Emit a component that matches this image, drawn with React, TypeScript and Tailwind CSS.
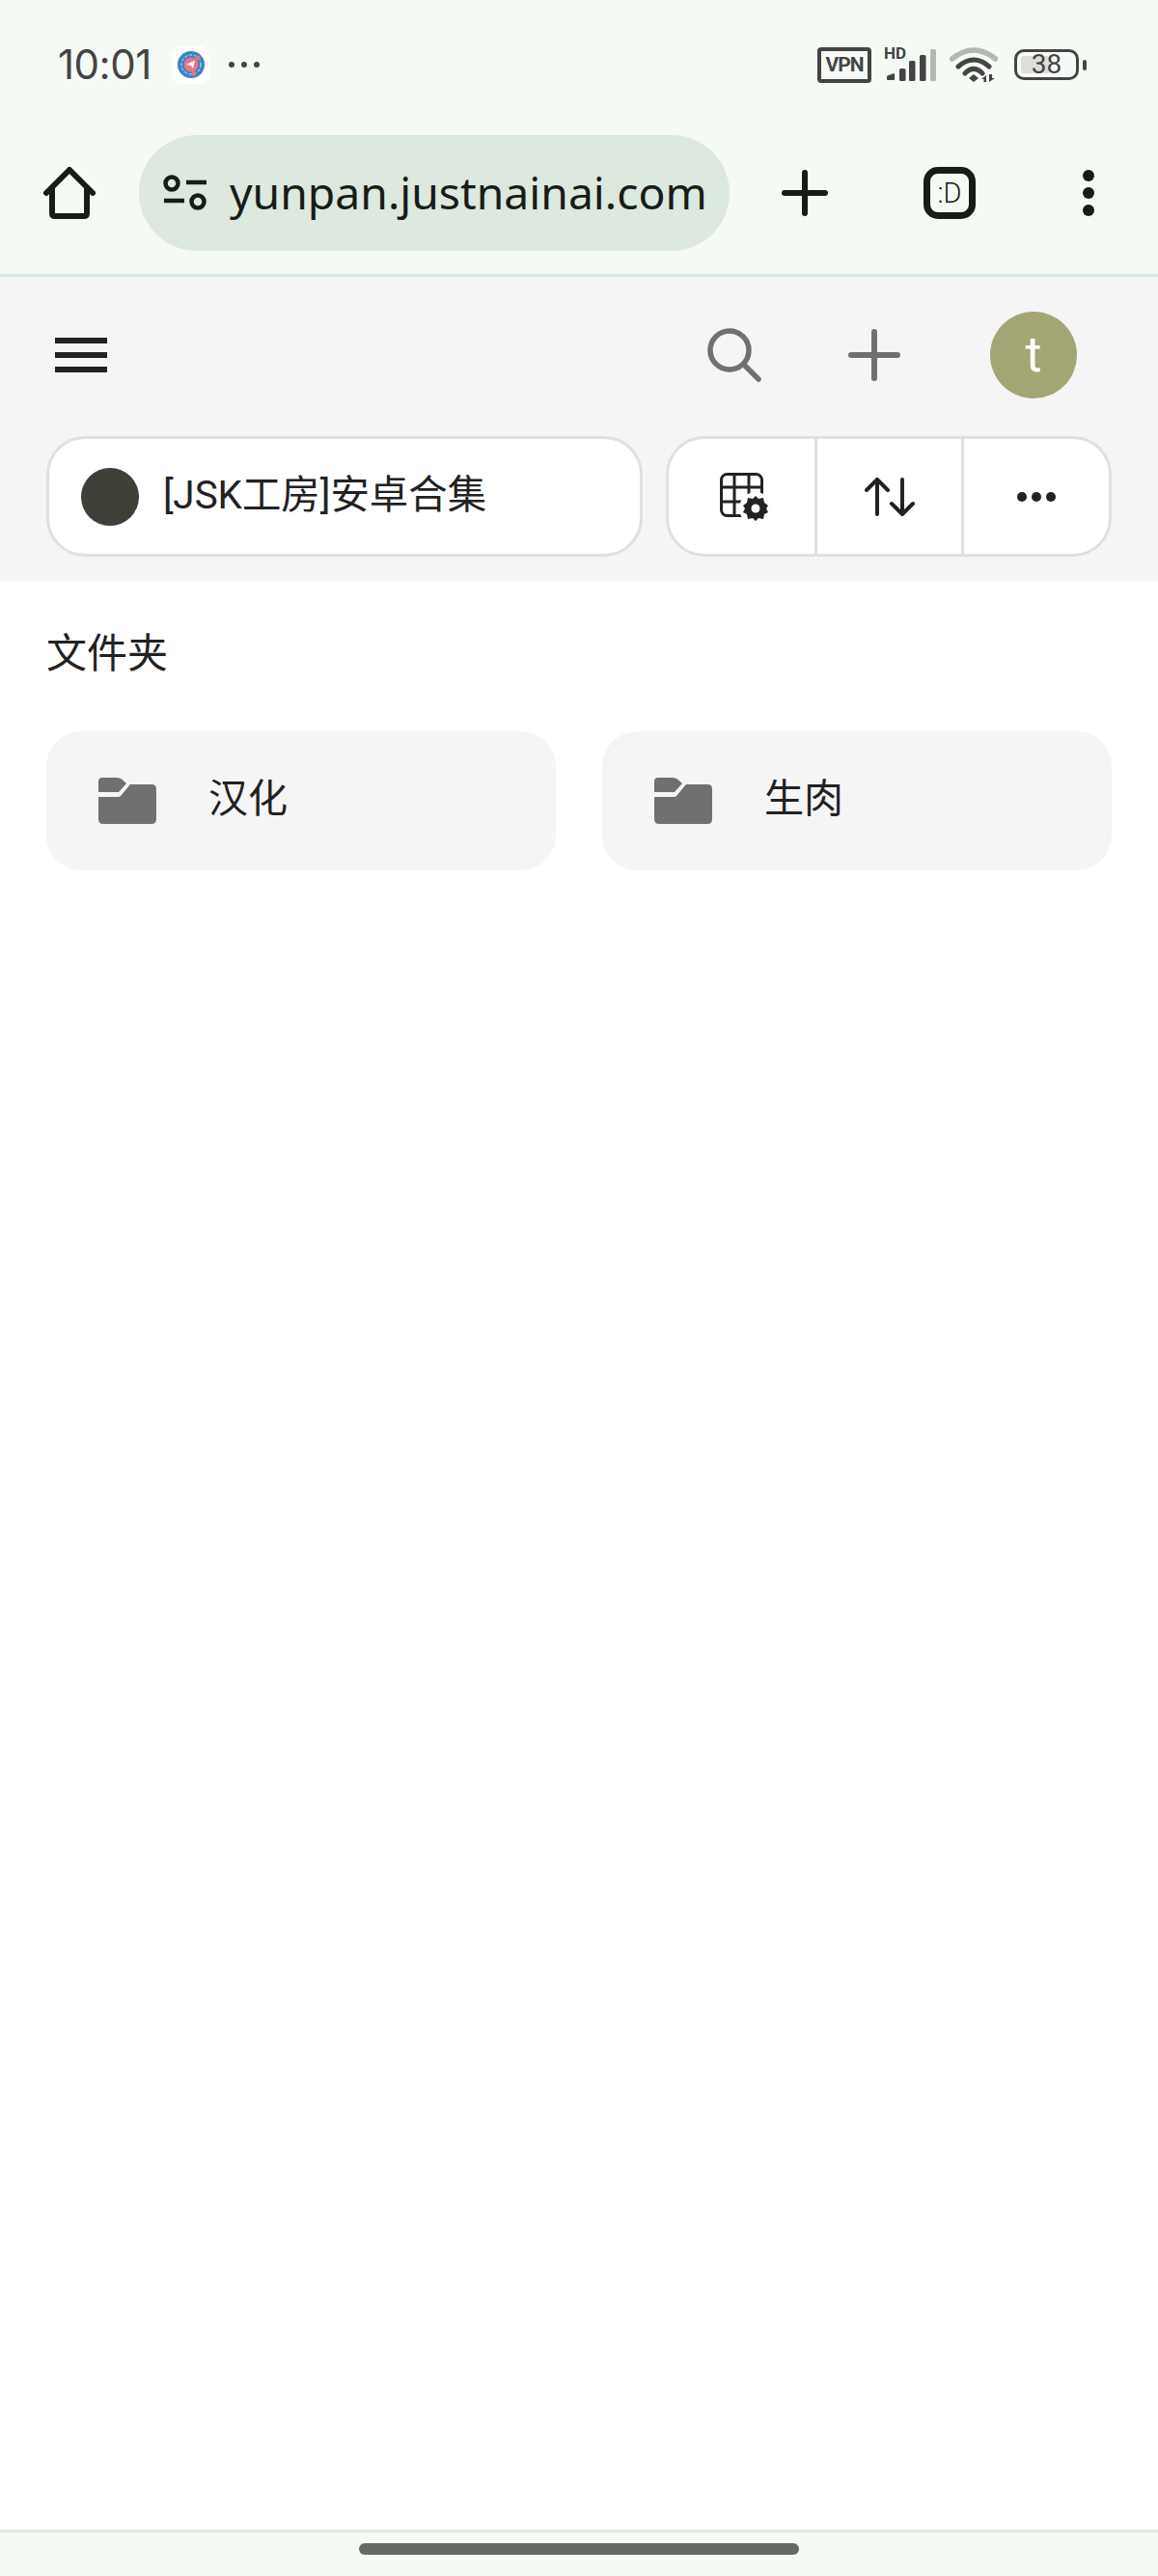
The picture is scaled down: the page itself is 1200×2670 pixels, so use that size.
import React from 'react';

const cjk = '[font-family:Roboto,"Noto_Sans_CJK_SC",sans-serif]';

function StatusIcons() {
    return (
        <div className="flex items-center ml-[578px]">
            {/* VPN badge */}
            <div className="w-[56px] h-[37px] border-[4px] border-[#444444] rounded-[4px] flex items-center justify-center text-[#444444] text-[21px] font-bold leading-none tracking-[-1px] [font-family:Roboto,sans-serif]">
                VPN
            </div>
            {/* HD + signal */}
            <div className="relative w-[54px] h-[36px] ml-[13px]">
                <span className="absolute left-0 top-[-3px] text-[#444444] text-[17px] font-bold leading-[18px] [font-family:Roboto,sans-serif]">HD</span>
                <svg width="54" height="36" viewBox="0 0 54 36" className="absolute left-0 top-0">
                    <path d="M3.5 33.5 V30 L10.5 27.5 V33.5 Z" fill="#444444" stroke="#444444" strokeLinejoin="round" />
                    <rect x="16" y="22" width="6.5" height="13" rx="1.5" fill="#444444" />
                    <rect x="26" y="14" width="6.5" height="21" rx="1.5" fill="#444444" />
                    <rect x="37" y="8" width="6.5" height="27" rx="1.5" fill="#444444" />
                    <rect x="48" y="2" width="6" height="33" rx="1.5" fill="#b4b8b2" />
                </svg>
            </div>
            {/* wifi */}
            <svg width="50" height="38" viewBox="0 0 50 38" className="ml-[14px]">
                <path d="M2.5 13 Q25 -5 47.5 13" fill="none" stroke="#b4b8b2" strokeWidth="5.5" strokeLinecap="round" />
                <path d="M9 21 Q25 7 41 21" fill="none" stroke="#444444" strokeWidth="5" strokeLinecap="round" />
                <path d="M16 28 Q25 19 34 28" fill="none" stroke="#444444" strokeWidth="5" strokeLinecap="round" />
                <path d="M20 33 L25 29 L30 33 L25 37 Z" fill="#444444" />
                <path d="M38 37 V30 L33 34 H35.5 V37 Z M41 29 V37 L47 33 H44 V29 Z" fill="#444444" />
            </svg>
            {/* battery */}
            <div className="relative w-[67px] h-[32px] ml-[17px] border-[3px] border-[#444444] rounded-[10px] flex items-center justify-center">
                <div className="absolute left-[4px] top-[4px] bottom-[4px] w-[30px] bg-[#dcdfd9] rounded-[3px]" />
                <span className="relative text-[#444444] text-[28px] leading-none [font-family:Roboto,sans-serif]">38</span>
            </div>
            <div className="w-[4px] h-[11px] ml-[4px] bg-[#444444] rounded-[2px]" />
        </div>
    );
}

function FolderIcon() {
    return (
        <svg width="60" height="48" viewBox="0 0 60 48" fill="#707070" className="shrink-0">
            <path d="M4 0 H19 Q22 0 24 1.5 L29 6 L21 15 H0 V4 Q0 0 4 0 Z" />
            <path d="M33 7 H55 Q60 7 60 12 V43 Q60 48 55 48 H5 Q0 48 0 43 V20 H20 Q22 20 23 19 Z" />
        </svg>
    );
}

function FolderCard({ name }: { name: string }) {
    return (
        <div className="h-[144px] bg-[#f5f5f5] rounded-[36px] flex items-center pl-[54px]">
            <FolderIcon />
            <span className="ml-[54px] pb-[4px] text-[41px] text-[#222222] leading-none">{name}</span>
        </div>
    );
}

export default function App() {
    return (
        <div className={`w-[1200px] h-[2670px] flex flex-col bg-white ${cjk}`}>
            {/* Browser chrome */}
            <div className="bg-[#f5fbf4] border-b-[3px] border-[#dde8df] pb-[24px]">
                <div className="h-[134px] flex items-center pl-[60px]">
                    <span className="w-[96px] text-[#444444] text-[42px] leading-none tracking-[-0.5px] [font-family:Inter,sans-serif]">10:01</span>
                    <div className="w-[39px] h-[39px] ml-[22px] bg-white rounded-[10px] flex items-center justify-center">
                        <svg width="28" height="28" viewBox="0 0 28 28">
                            <circle cx="14" cy="14" r="14" fill="#3a86c0" />
                            <circle cx="14" cy="14" r="10" fill="none" stroke="#ffffff" strokeWidth="0.8" strokeDasharray="3 2" />
                            <circle cx="14" cy="14" r="7.5" fill="#e8728e" />
                            <circle cx="21" cy="7" r="2.5" fill="#e8728e" />
                            <circle cx="17" cy="23" r="2.5" fill="#e8728e" />
                            <path d="M9 14 L18 9.5 L16 18 L14 15 Z" fill="#ffffff" />
                        </svg>
                    </div>
                    <div className="flex gap-[7px] ml-[20px]">
                        <div className="w-[6px] h-[6px] rounded-full bg-[#444444]" />
                        <div className="w-[6px] h-[6px] rounded-full bg-[#444444]" />
                        <div className="w-[6px] h-[6px] rounded-full bg-[#444444]" />
                    </div>
                    <StatusIcons />
                </div>
                <div className="h-[120px] mt-[6px] flex items-center pl-[45px]">
                    <svg width="54" height="54" viewBox="0 0 54 54" fill="none" stroke="#171c17" strokeWidth="6" strokeLinecap="round" strokeLinejoin="round" className="shrink-0">
                        <path d="M3 27 L27 3 L51 27" />
                        <path d="M9 22 V48 Q9 51 12 51 H42 Q45 51 45 48 V22" />
                    </svg>
                    <div className="w-[612px] h-[120px] ml-[45px] bg-[#dde8df] rounded-full flex items-center pl-[25px]">
                        <svg width="46" height="40" viewBox="0 0 46 40" fill="none" stroke="#171c17" strokeWidth="4.5" className="shrink-0">
                            <circle cx="9" cy="10" r="6.5" />
                            <path d="M24 9 H45" />
                            <path d="M1 28 H22" />
                            <circle cx="36" cy="29" r="6.5" />
                        </svg>
                        <span className="ml-[23px] text-[#171c17] text-[46.3px] leading-none whitespace-nowrap [font-family:'Noto_Sans',sans-serif]">yunpan.justnainai.com</span>
                    </div>
                    <svg width="48" height="48" viewBox="0 0 48 48" fill="none" stroke="#171c17" strokeWidth="6" strokeLinecap="round" className="ml-[54px] shrink-0">
                        <path d="M3 24 H45 M24 3 V45" />
                    </svg>
                    <div className="w-[54px] h-[54px] ml-[99px] border-[7px] border-[#171c17] rounded-[15px] flex items-center justify-center text-[#171c17] text-[29px] font-light leading-none shrink-0">
                        :D
                    </div>
                    <div className="flex flex-col gap-[6px] ml-[111px] shrink-0">
                        <div className="w-[12px] h-[12px] rounded-full bg-[#171c17]" />
                        <div className="w-[12px] h-[12px] rounded-full bg-[#171c17]" />
                        <div className="w-[12px] h-[12px] rounded-full bg-[#171c17]" />
                    </div>
                </div>
            </div>

            {/* Drive toolbar */}
            <div className="bg-[#f5f5f5] pt-[36px] pb-[25px]">
                <div className="h-[90px] flex items-center pl-[57px]">
                    <div className="w-[54px] flex flex-col gap-[9px]">
                        <div className="h-[6px] bg-[#222222]" />
                        <div className="h-[6px] bg-[#222222]" />
                        <div className="h-[6px] bg-[#222222]" />
                    </div>
                    <svg width="56" height="56" viewBox="0 0 56 56" fill="none" stroke="#707070" strokeWidth="5.5" strokeLinecap="round" className="ml-[622px] shrink-0">
                        <circle cx="23" cy="23" r="20" />
                        <path d="M38 38 L53 53" />
                    </svg>
                    <svg width="54" height="54" viewBox="0 0 54 54" fill="none" stroke="#707070" strokeWidth="6" strokeLinecap="round" className="ml-[90px] shrink-0">
                        <path d="M3 27 H51 M27 3 V51" />
                    </svg>
                    <div className="w-[90px] h-[90px] ml-[93px] rounded-full bg-[#a4a574] flex items-center justify-center text-white text-[52px] leading-none">
                        t
                    </div>
                </div>
                <div className="mt-[39px] flex pl-[48px]">
                    <div className="w-[618px] h-[125px] bg-white border-[3px] border-[#e0e0e0] rounded-[40px] flex items-center pl-[33px]">
                        <div className="w-[60px] h-[60px] rounded-full bg-[#3f3f37]" />
                        <span className="ml-[25px] text-[40.4px] text-[#222222] leading-none">[JSK工房]安卓合集</span>
                    </div>
                    <div className="w-[462px] h-[125px] ml-[24px] bg-white border-[3px] border-[#e0e0e0] rounded-[40px] flex">
                        <div className="w-[151px] flex items-center justify-center">
                            <svg width="50" height="50" viewBox="0 0 50 50" fill="none" className="ml-[4px]">
                                <rect x="1.5" y="1.5" width="42" height="43" rx="6" stroke="#222222" strokeWidth="3" />
                                <path d="M15 1 V45 M30 1 V30 M1 15 H44 M1 30 H32" stroke="#222222" strokeWidth="3" />
                                <circle cx="37" cy="37" r="17" fill="#ffffff" />
                                <path d="M37 24 L40 27 L45 26 L46 31 L50 34 L48 37 L50 41 L46 43 L45 48 L40 47 L37 50 L34 47 L29 48 L28 43 L24 41 L26 37 L24 34 L28 31 L29 26 L34 27 Z" fill="#222222" />
                                <circle cx="37" cy="37" r="4.5" fill="#ffffff" />
                            </svg>
                        </div>
                        <div className="w-[152px] border-l-[3px] border-[#e0e0e0] flex items-center justify-center">
                            <svg width="52" height="40" viewBox="0 0 52 40" fill="none" stroke="#222222" strokeWidth="4" strokeLinecap="round" strokeLinejoin="round">
                                <path d="M13 38 V2 M2 13 L13 2 L24 13" />
                                <path d="M39 2 V38 M28 27 L39 38 L50 27" />
                            </svg>
                        </div>
                        <div className="flex-1 border-l-[3px] border-[#e0e0e0] flex items-center justify-center gap-[5px]">
                            <div className="w-[10px] h-[10px] rounded-full bg-[#222222]" />
                            <div className="w-[10px] h-[10px] rounded-full bg-[#222222]" />
                            <div className="w-[10px] h-[10px] rounded-full bg-[#222222]" />
                        </div>
                    </div>
                </div>
            </div>

            {/* Folder list */}
            <div className="flex-1 px-[48px] pt-[48px]">
                <div className="h-[56px] text-[42px] leading-[56px] text-[#222222]">文件夹</div>
                <div className="mt-[52px] grid grid-cols-2 gap-[48px]">
                    <FolderCard name="汉化" />
                    <FolderCard name="生肉" />
                </div>
            </div>

            {/* Gesture bar */}
            <div className="h-[48px] bg-[#f5fbf4] border-t-[3px] border-[#dde8df] flex justify-center pt-[11px]">
                <div className="w-[456px] h-[12px] rounded-full bg-[#666864]" />
            </div>
        </div>
    );
}
